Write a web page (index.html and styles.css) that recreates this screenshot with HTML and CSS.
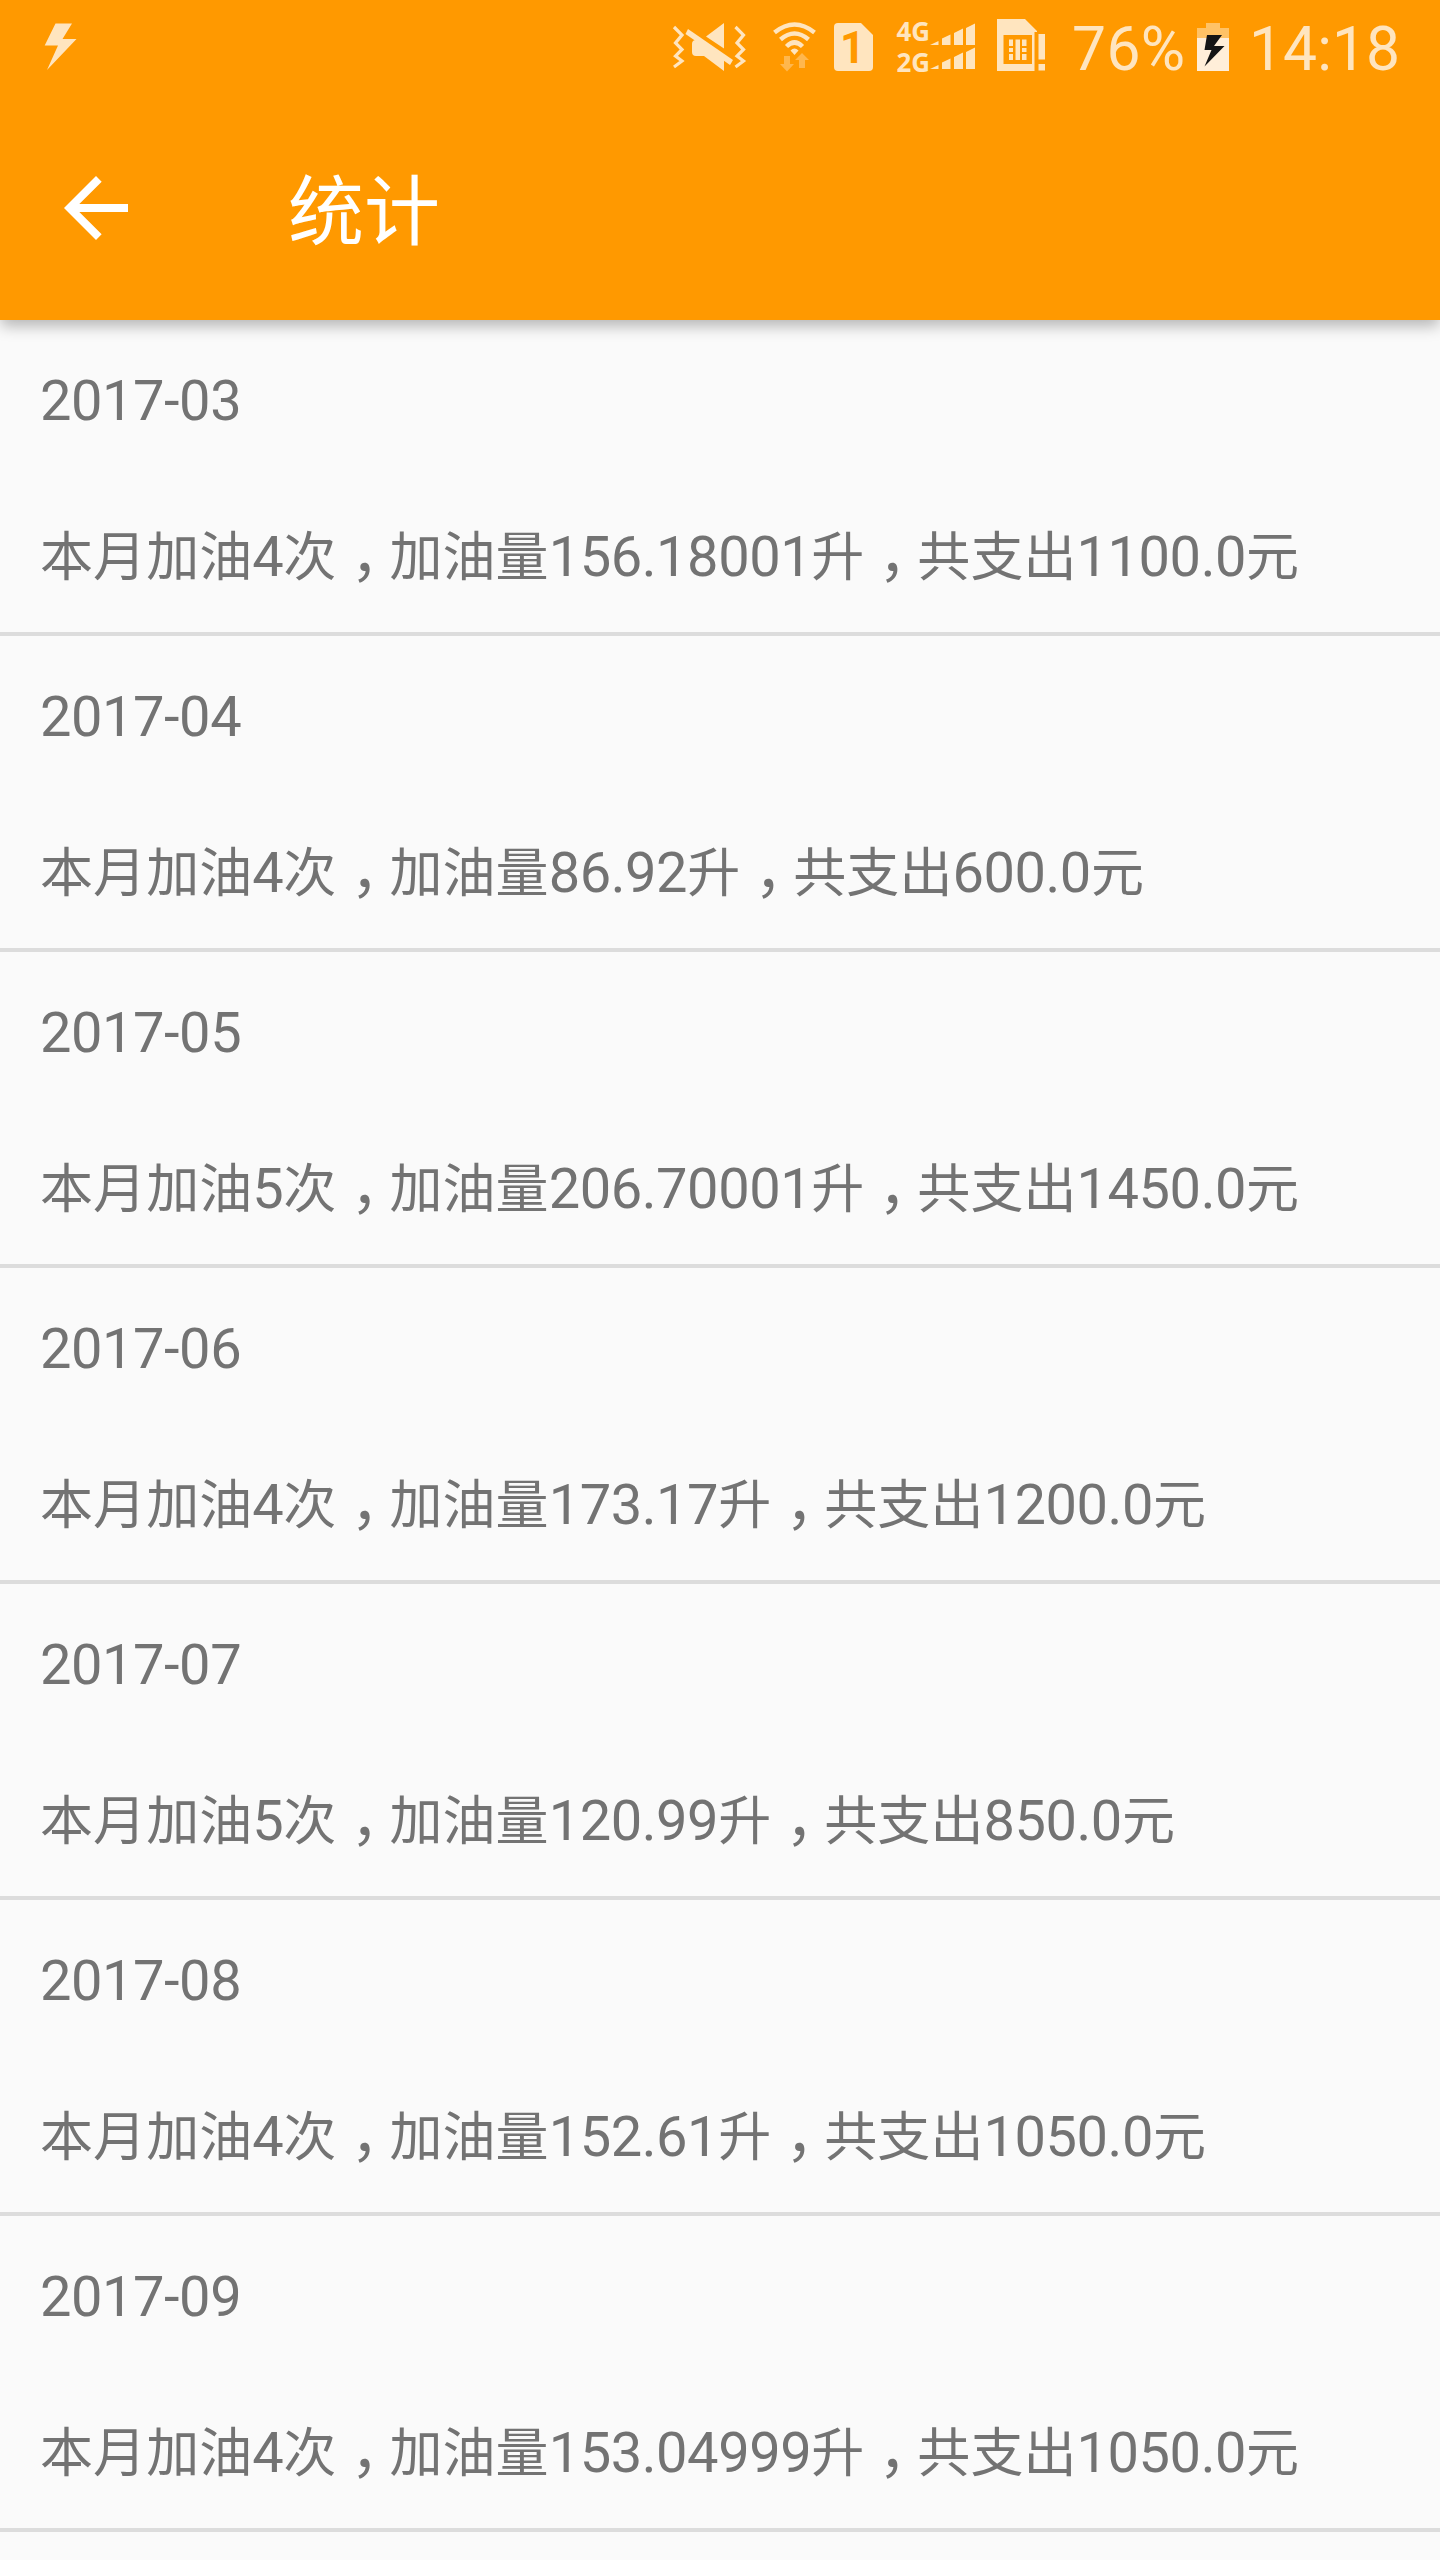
FILE: index.html
```html
<!DOCTYPE html>
<html lang="zh-CN">
<head>
<meta charset="utf-8">
<title>统计</title>
<link rel="stylesheet" href="styles.css">
</head>
<body>
<header class="app-bar">
  <div class="status-bar">
    <svg class="icon" width="80" height="96" viewBox="0 0 80 96"><path d="M55.500 23.500H72L62.500 39H76.500L47 70L58 45.500H44.700Z"/></svg>
    <div class="status-icons">
      <svg class="icon" width="90" height="96" viewBox="665 0 90 96">
        <path class="line" d="M674 27L682 35L675.500 43L682 49.500L675.500 56L682 61L674 67"/>
        <path class="line" d="M735.500 27L743.500 35L737 43L743.500 49.500L737 56L743.500 61L735.500 67"/>
        <path d="M724 23V48.500L706 36.500ZM696 40H699L724 57.500V71L704 56H696Q692 56 692 52V44Q692 40 696 40Z"/>
        <path d="M688 29L733 60L730 65L685.500 34Z"/>
      </svg>
      <svg class="icon" width="75" height="96" viewBox="755 0 75 96">
        <path d="M794.500 55L790.500 50.500Q794.500 46.500 798.500 50.500Z"/>
        <path class="wave" d="M786.500 46.500Q794.500 38.500 802.500 46.500M780.500 39.500Q794.500 27.500 808.500 39.500M774.500 32.500Q794.500 16.500 814.500 32.500"/>
        <path class="faint" d="M784 56H790V64H794L787 71.500L780 64H784ZM799 68V60H795L802 53L809 60H805V68Z"/>
      </svg>
      <svg class="icon" width="60" height="96" viewBox="830 0 60 96">
        <path d="M838 23H861L873 35V67Q873 71 869 71H838Q834 71 834 67V27Q834 23 838 23Z"/>
        <text class="sim-number" x="840" y="63" textLength="25" lengthAdjust="spacingAndGlyphs">1</text>
      </svg>
      <svg class="icon" width="96" height="96" viewBox="890 0 96 96">
        <text class="network" x="896.500" y="41" textLength="33.500" lengthAdjust="spacingAndGlyphs">4G</text>
        <text class="network" x="896.500" y="71.500" textLength="33.500" lengthAdjust="spacingAndGlyphs">2G</text>
        <path d="M930 45L938.500 41V45ZM942 45V38.500L950.500 34.500V45ZM954 45V33L963 28.500V45ZM966 45V28L975 23.500V45ZM930 69L938.500 65V69ZM942 69V62.500L950.500 58.500V69ZM954 69V57L963 52.500V69ZM966 69V52L975 47.500V69Z"/>
      </svg>
      <svg class="icon" width="68" height="96" viewBox="986 0 68 96">
        <path fill-rule="evenodd" d="M997 19H1025L1037 31V32H1034.500V71H997ZM1003.500 35V64H1032V35Z"/>
        <path d="M1009 39.500H1013V46H1009ZM1009 48H1013V52H1009ZM1009 54H1013V60H1009ZM1015.500 39.500H1020V60H1015.500ZM1022 39.500H1026.500V46H1022ZM1022 48H1026.500V52H1022ZM1022 54H1026.500V60H1022ZM1038.500 34H1045V59.500H1038.500ZM1038.500 64H1045V70.500H1038.500Z"/>
      </svg>
      <span class="battery-level">76%</span>
      <svg class="icon" width="52" height="96" viewBox="1190 0 52 96">
        <path class="battery-empty" d="M1206 23H1220V28H1229V38H1197V28H1206Z"/>
        <path class="battery-charge" d="M1197 38H1229V71H1197Z"/>
        <path class="battery-bolt" d="M1207 35H1222L1214 46H1224.500L1204.500 66.500L1211.500 50H1204.500Z"/>
      </svg>
      <span class="clock">14:18</span>
    </div>
  </div>
  <div class="toolbar">
    <svg class="back" width="96" height="96" viewBox="0 0 24 24"><path d="M20 11H7.830l5.590-5.590L12 4l-8 8 8 8 1.410-1.410L7.830 13H20v-2z"/></svg>
    <h1 class="title">统计</h1>
  </div>
</header>
<main class="months">
  <section class="month"><p>2017-03</p><p><span class="zh">本月加油</span>4<span class="zh">次<span class="comma">，</span>加油量</span>156.18001<span class="zh">升<span class="comma">，</span>共支出</span>1100.0<span class="zh">元</span></p></section>
  <section class="month"><p>2017-04</p><p><span class="zh">本月加油</span>4<span class="zh">次<span class="comma">，</span>加油量</span>86.92<span class="zh">升<span class="comma">，</span>共支出</span>600.0<span class="zh">元</span></p></section>
  <section class="month"><p>2017-05</p><p><span class="zh">本月加油</span>5<span class="zh">次<span class="comma">，</span>加油量</span>206.70001<span class="zh">升<span class="comma">，</span>共支出</span>1450.0<span class="zh">元</span></p></section>
  <section class="month"><p>2017-06</p><p><span class="zh">本月加油</span>4<span class="zh">次<span class="comma">，</span>加油量</span>173.17<span class="zh">升<span class="comma">，</span>共支出</span>1200.0<span class="zh">元</span></p></section>
  <section class="month"><p>2017-07</p><p><span class="zh">本月加油</span>5<span class="zh">次<span class="comma">，</span>加油量</span>120.99<span class="zh">升<span class="comma">，</span>共支出</span>850.0<span class="zh">元</span></p></section>
  <section class="month"><p>2017-08</p><p><span class="zh">本月加油</span>4<span class="zh">次<span class="comma">，</span>加油量</span>152.61<span class="zh">升<span class="comma">，</span>共支出</span>1050.0<span class="zh">元</span></p></section>
  <section class="month"><p>2017-09</p><p><span class="zh">本月加油</span>4<span class="zh">次<span class="comma">，</span>加油量</span>153.04999<span class="zh">升<span class="comma">，</span>共支出</span>1050.0<span class="zh">元</span></p></section>
</main>
</body>
</html>
```
FILE: styles.css
```css
* { box-sizing: border-box; }
body {
  margin: 0;
  height: 2560px;
  overflow: hidden;
  background: #fafafa;
  color: #737373;
  font-family: Roboto, "Noto Sans CJK SC", sans-serif;
}
.app-bar {
  position: relative;
  height: 320px;
  background: #ff9900;
  box-shadow: 0 7px 14px -1px rgba(0, 0, 0, .28);
}
.status-bar {
  display: flex;
  justify-content: space-between;
  height: 96px;
  color: #ffe5bf;
}
.status-icons {
  display: flex;
  width: 775px;
}
.icon { flex: none; fill: #ffe5bf; }
.line { fill: none; stroke: #ffe5bf; stroke-width: 3.2; }
.wave { fill: none; stroke: #ffe5bf; stroke-width: 4.5; }
.faint { fill: #ffb74d; }
.sim-number { fill: #ff9900; font: 700 45px Roboto, sans-serif; }
.network { font: 700 26px "Open Sans", sans-serif; }
.battery-empty { fill: #ffc266; }
.battery-charge { fill: #ffeed9; }
.battery-bolt { fill: #151515; }
.battery-level, .clock {
  flex: none;
  font-size: 60.5px;
  line-height: 96px;
  padding-top: 2px;
  white-space: nowrap;
}
.battery-level { width: 136px; padding-left: 18px; letter-spacing: .4px; }
.clock { padding-left: 7px; letter-spacing: .1px; }
.toolbar {
  display: flex;
  align-items: center;
  height: 224px;
  padding-left: 48px;
}
.back { fill: #fff; }
.title {
  margin: 0 0 4px 144px;
  color: #fff;
  font: 400 76px/96px "Noto Sans CJK SC", sans-serif;
}
.month {
  height: 316px;
  padding: 3px 40px 0;
  border-bottom: 4px solid #dcdcdc;
}
.month p {
  margin: 0;
  height: 156px;
  font-size: 56px;
  line-height: 156px;
  letter-spacing: -.45px;
  white-space: nowrap;
}
.zh {
  font-family: "Noto Sans CJK SC", sans-serif;
  font-size: 53px;
  line-height: 1;
  letter-spacing: .08px;
}
/* Half-width comma, padded back to a full cell so that it sits near the middle */
.comma {
  display: inline-block;
  width: 53px;
  padding-left: 14px;
  font-size: 58px;
  font-feature-settings: "halt";
}
```
